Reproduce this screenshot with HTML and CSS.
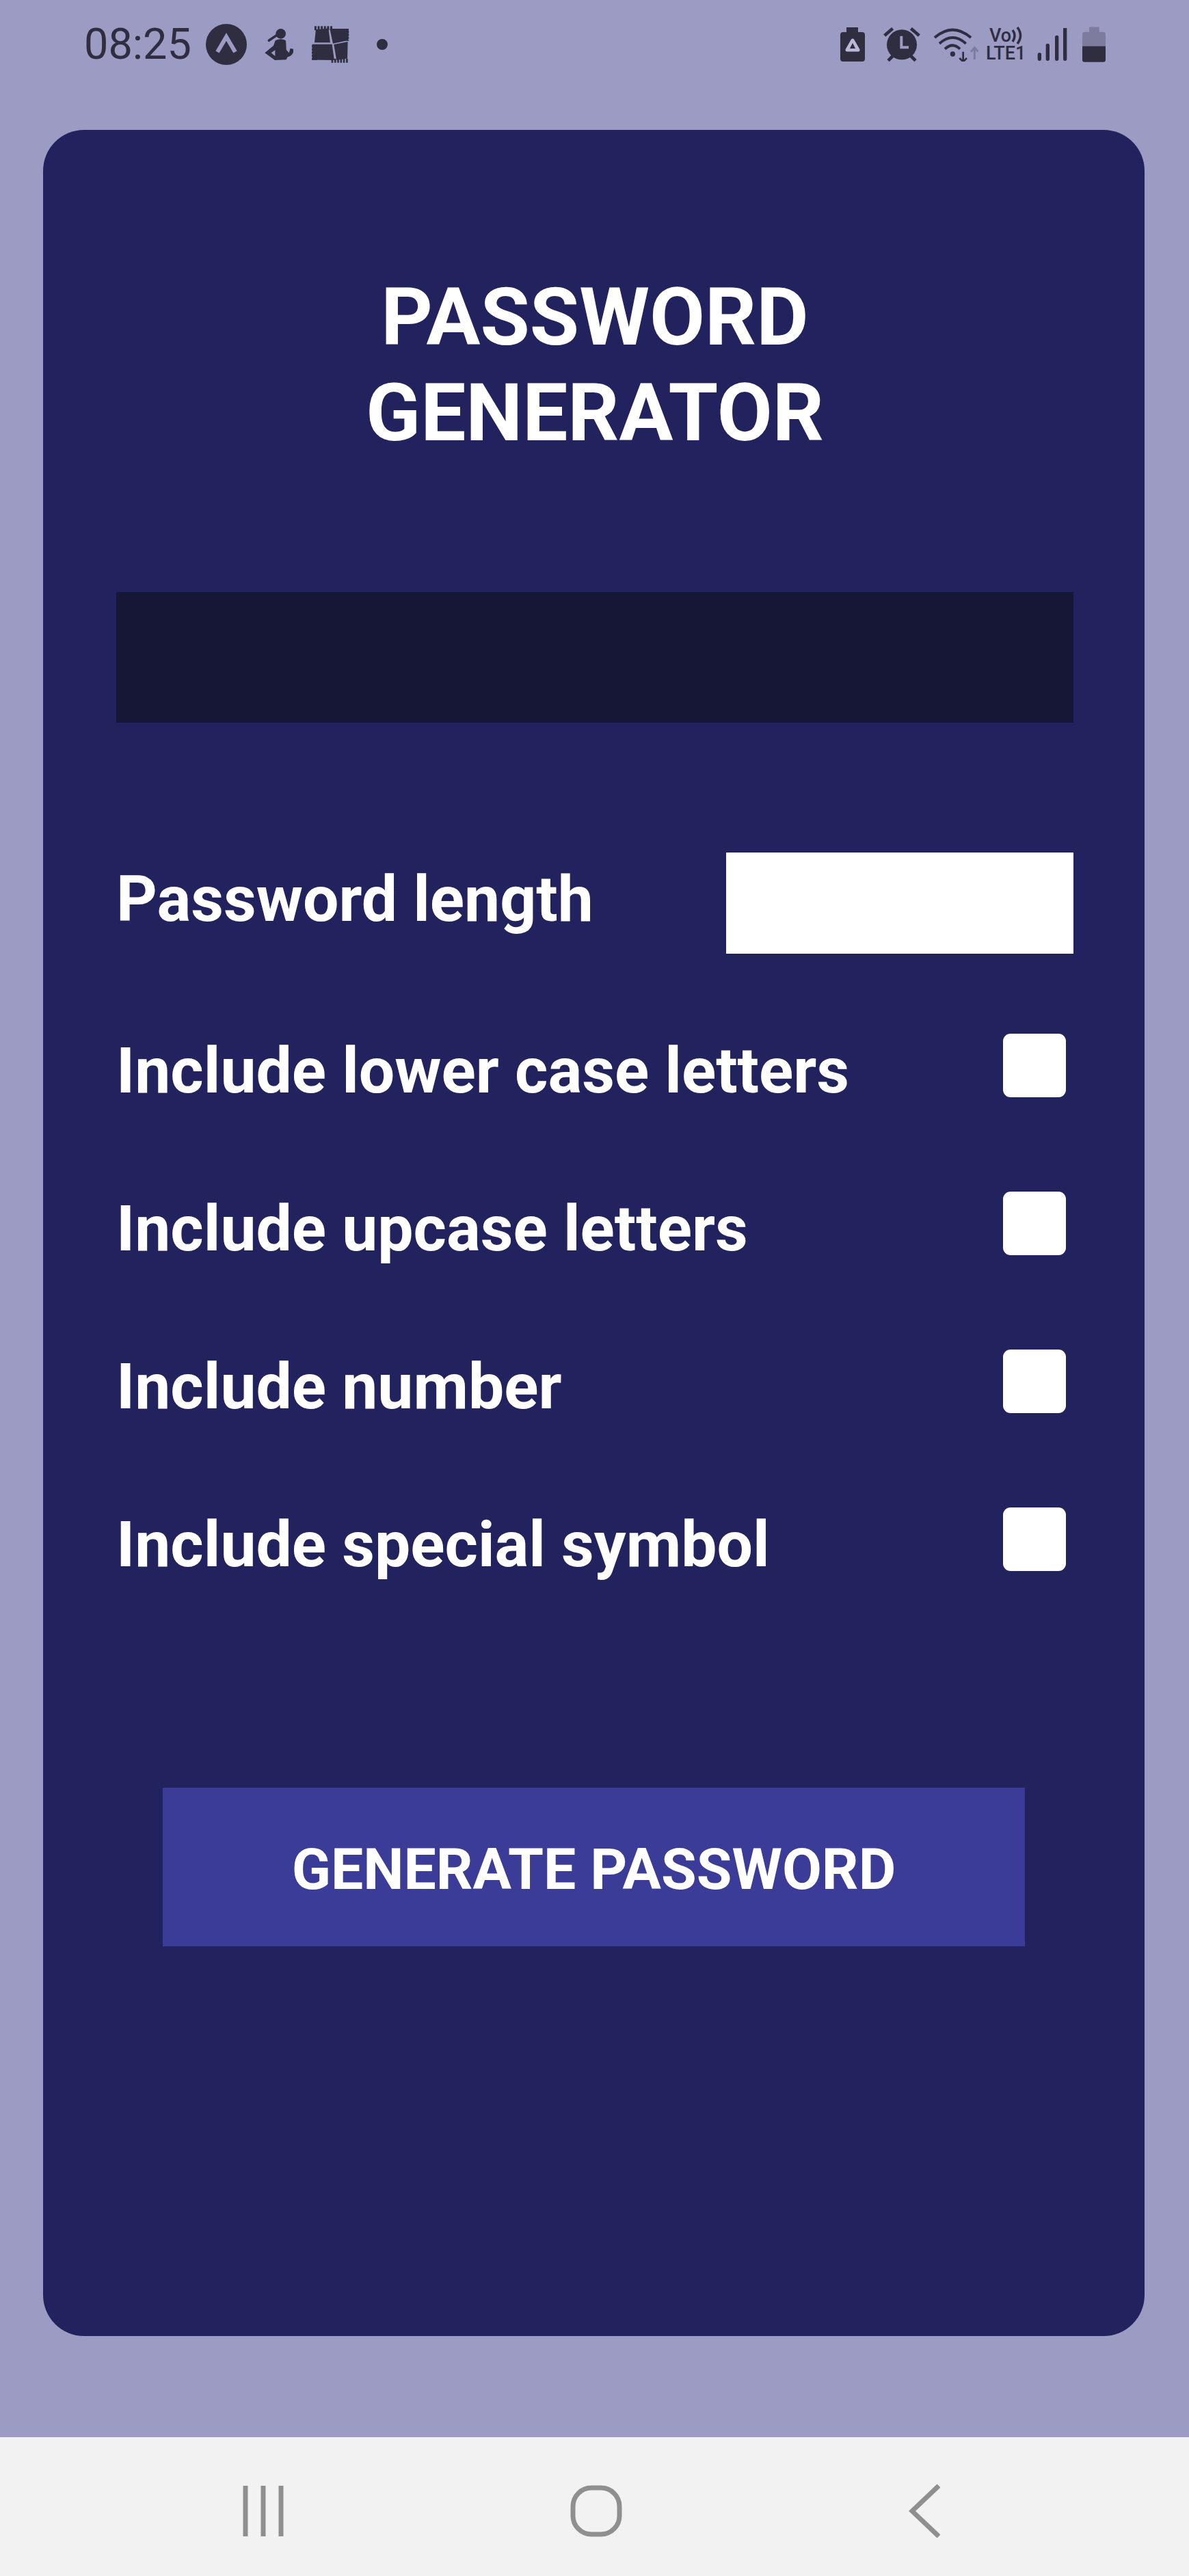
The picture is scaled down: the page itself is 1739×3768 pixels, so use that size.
FILE: index.html
```html
<!DOCTYPE html>
<html lang="en">
<head>
    <meta charset="UTF-8">
    <meta name="viewport" content="width=device-width, initial-scale=1.0">
    <title>Password Generator</title>
    <link rel="stylesheet" href="styles.css">
</head>
<body>
    <div class="status-bar">
        <div class="status-left">
            <span class="clock">08:25</span>
            <svg class="icon-expo" width="60" height="60" viewBox="0 0 60 60">
                <circle cx="30" cy="30" r="30" fill="#2e2e40"/>
                <path d="M17 41 L30 19 L43 41" fill="none" stroke="#9c9bc3" stroke-width="6"/>
            </svg>
            <svg class="icon-person" width="44" height="50" viewBox="905 120 132 150">
                <circle cx="982" cy="148" r="22" fill="#2e2e40"/>
                <path d="M962 156 L930 178" stroke="#2e2e40" stroke-width="11" stroke-linecap="round"/>
                <path d="M958 178 Q982 166 1004 178 Q1006 205 1006 218 L1018 232 L1024 212 L1040 216 Q1036 246 1012 250 L1006 262 L956 264 L912 232 L950 200 Z" fill="#2e2e40"/>
                <path d="M940 232 L957 220 L957 246 Z" fill="#9c9bc3"/>
            </svg>
            <svg class="icon-quilt" width="56" height="56" viewBox="1115 112 170 168">
                <path d="M1136 130 L1192 125 L1200 188 L1130 188 Z" fill="#2e2e40"/>
                <path d="M1198 126 L1282 126 L1280 178 L1212 192 Z" fill="#2e2e40"/>
                <path d="M1120 195 L1208 195 L1218 266 L1120 264 Z" fill="#2e2e40"/>
                <path d="M1216 196 L1278 184 L1276 258 L1228 266 Z" fill="#2e2e40"/>
                <path d="M1130 124 H1210" stroke="#2e2e40" stroke-width="18" stroke-dasharray="9 5"/>
                <path d="M1268 137 V180" stroke="#2e2e40" stroke-width="30" stroke-dasharray="8 5"/>
                <path d="M1130 200 V268" stroke="#2e2e40" stroke-width="24" stroke-dasharray="9 5"/>
                <path d="M1205 268 H1278" stroke="#2e2e40" stroke-width="18" stroke-dasharray="8 5"/>
            </svg>
            <span class="notif-dot"></span>
        </div>
        <div class="status-right">
            <svg class="icon-saver" width="36" height="52" viewBox="1229 39 36 52">
                <path d="M1238 40 H1255 V47 H1261 Q1265 47 1265 51 V86 Q1265 90 1261 90 H1233 Q1229 90 1229 86 V51 Q1229 47 1233 47 H1238 Z" fill="#2e2e40"/>
                <path d="M1247 59 L1255 73 H1239 Z" fill="none" stroke="#b9b8d6" stroke-width="5" stroke-linejoin="round"/>
                <path d="M1247 63 L1251 71 H1243 Z" fill="#2e2e40"/>
            </svg>
            <svg class="icon-alarm" width="54" height="50" viewBox="335 120 162 150">
                <circle cx="416" cy="196" r="66" fill="#2e2e40"/>
                <path d="M414 158 V208 H446" fill="none" stroke="#9c9bc3" stroke-width="12"/>
                <path d="M340 156 L376 125 M492 156 L456 125 M356 266 L376 246 M476 266 L456 246" stroke="#2e2e40" stroke-width="14"/>
            </svg>
            <svg class="icon-wifi" width="66" height="50" viewBox="555 115 198 150">
                <path d="M561 160 Q640 92 720 160 M582 186 Q640 134 698 186 M606 210 Q640 178 672 210" fill="none" stroke="#2e2e40" stroke-width="12"/>
                <circle cx="640" cy="232" r="11" fill="#2e2e40"/>
                <path d="M686 222 V262 M670 250 L686 266 L702 250" fill="none" stroke="#2e2e40" stroke-width="8"/>
                <path d="M736 256 V210 M720 222 L736 204 L752 222" fill="none" stroke="#7d7c9f" stroke-width="9"/>
            </svg>
            <div class="volte">
                <div class="volte-top">
                    <span>Vo</span>
                    <svg width="18" height="26" viewBox="0 0 18 26">
                        <path d="M2 5 Q8 13 2 22 M9 1 Q18 13 9 25" fill="none" stroke="#2e2e40" stroke-width="3.5"/>
                    </svg>
                </div>
                <span>LTE1</span>
            </div>
            <svg class="icon-signal" width="44" height="48" viewBox="1010 130 132 144">
                <path d="M1020 246 V266 M1056 206 V266 M1096 170 V266 M1132 134 V266" stroke="#2e2e40" stroke-width="16" stroke-linecap="round"/>
            </svg>
            <svg class="icon-battery" width="34" height="53" viewBox="1208 118 102 156">
                <path d="M1238 118 H1282 V140 H1300 Q1310 140 1310 150 V202 H1208 V150 Q1208 140 1218 140 H1238 Z" fill="#7d7c9f"/>
                <path d="M1208 202 H1310 V262 Q1310 272 1300 272 H1218 Q1208 272 1208 262 Z" fill="#2e2e40"/>
            </svg>
        </div>
    </div>

    <div class="card">
        <h1 class="title">PASSWORD GENERATOR</h1>
        <div class="output"></div>

        <div class="row row-length">
            <label for="length">Password length</label>
            <input type="text" id="length" class="length-input">
        </div>
        <div class="row">
            <label for="lower">Include lower case letters</label>
            <input type="checkbox" id="lower" class="check">
        </div>
        <div class="row">
            <label for="upper">Include upcase letters</label>
            <input type="checkbox" id="upper" class="check">
        </div>
        <div class="row">
            <label for="number">Include number</label>
            <input type="checkbox" id="number" class="check">
        </div>
        <div class="row">
            <label for="symbol">Include special symbol</label>
            <input type="checkbox" id="symbol" class="check">
        </div>

        <button type="button" class="generate">GENERATE PASSWORD</button>
    </div>

    <div class="nav-bar">
        <svg width="60" height="74" viewBox="0 0 60 74">
            <path d="M4 0 V74 M30 0 V74 M56 0 V74" stroke="#8f8f8f" stroke-width="7"/>
        </svg>
        <svg width="76" height="76" viewBox="0 0 76 76">
            <rect x="4" y="4" width="68" height="68" rx="27" fill="none" stroke="#8f8f8f" stroke-width="7"/>
        </svg>
        <svg width="46" height="78" viewBox="0 0 46 78">
            <path d="M44 2 L5 39 L44 76" fill="none" stroke="#8f8f8f" stroke-width="7"/>
        </svg>
    </div>
</body>
</html>
```

FILE: styles.css
```css
html, body {
    margin: 0;
    height: 100%;
}

body {
    font-family: 'Roboto', 'Liberation Sans', sans-serif;
    background-color: #9c9bc3;
    display: flex;
    flex-direction: column;
    height: 3768px;
    overflow: hidden;
}

.status-bar {
    height: 190px;
    box-sizing: border-box;
    display: flex;
    justify-content: space-between;
    padding: 37px 122px 0 123px;
    color: #2e2e40;
}

.status-left,
.status-right {
    display: flex;
    align-items: center;
    height: 56px;
}

.clock {
    font-size: 63px;
    line-height: 56px;
    margin-right: 21px;
}

.icon-person {
    margin-left: 24px;
}

.icon-quilt {
    margin-left: 26px;
}

.notif-dot {
    width: 16px;
    height: 16px;
    border-radius: 50%;
    background-color: #2e2e40;
    margin-left: 40px;
}

.icon-alarm {
    margin-left: 27px;
}

.icon-wifi {
    margin-left: 19px;
}

.volte {
    margin-left: 11px;
    width: 62px;
    font-size: 27px;
    font-weight: 500;
    line-height: 26px;
}

.volte-top {
    display: flex;
    align-items: center;
    padding-left: 5px;
}

.icon-signal {
    margin-left: 13px;
}

.icon-battery {
    margin-left: 22px;
}

.card {
    background-color: #22235e;
    border-radius: 60px;
    width: 1611px;
    height: 3227px;
    box-sizing: border-box;
    margin: 0 0 148px 63px;
    padding: 204px 104px 0 107px;
    display: flex;
    flex-direction: column;
    color: #fff;
}

.title {
    font-size: 117.5px;
    line-height: 140px;
    font-weight: 700;
    text-align: center;
    margin: 0 240px 192px;
}

.output {
    height: 191px;
    background-color: #161736;
    margin-bottom: 190px;
}

.row {
    display: flex;
    justify-content: space-between;
    align-items: center;
    margin-bottom: 138px;
    font-size: 93px;
    font-weight: 700;
}

.row-length {
    margin-bottom: 117px;
}

.row label {
    line-height: 77px;
    margin-top: 16px;
}

.row-length label {
    margin-top: 0;
    margin-bottom: 12px;
}

.length-input {
    width: 508px;
    height: 148px;
    box-sizing: border-box;
    border: 0;
    border-radius: 0;
    background-color: #fff;
    margin: 0;
    padding: 0;
}

.check {
    appearance: none;
    -webkit-appearance: none;
    width: 92px;
    height: 93px;
    background-color: #fff;
    border-radius: 11px;
    margin: 0 11px 0 0;
}

.generate {
    align-self: flex-start;
    width: 1261px;
    height: 232px;
    margin: 179px 0 0 68px;
    background-color: #3b3b98;
    color: #fff;
    font-family: inherit;
    font-size: 84px;
    font-weight: 700;
    border: none;
    padding: 6px 0 0;
}

.nav-bar {
    flex: 1;
    background-color: #f2f2f2;
    display: flex;
    justify-content: space-between;
    align-items: center;
    padding: 13px 364px 0 355px;
}
```
